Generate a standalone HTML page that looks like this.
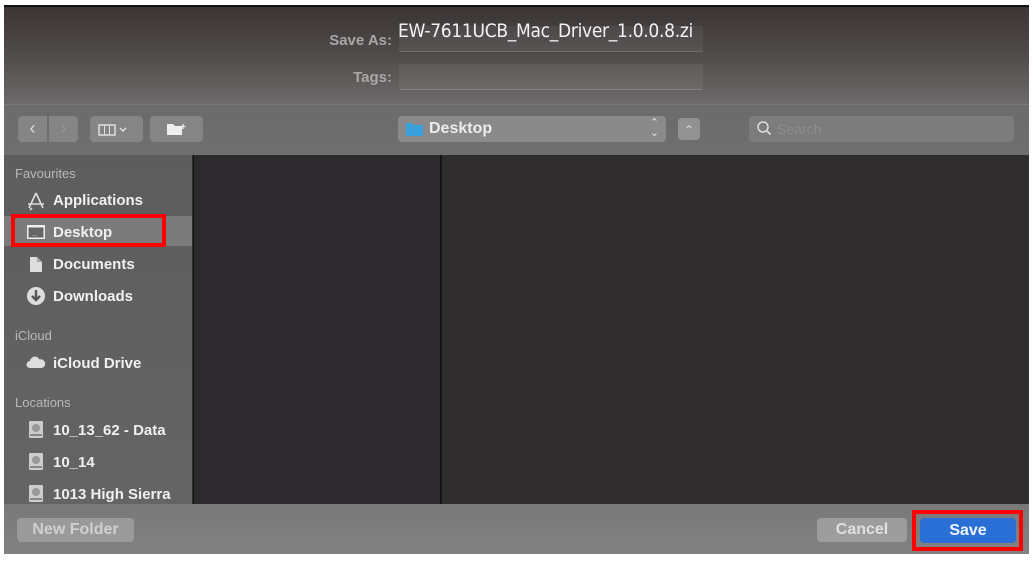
<!DOCTYPE html>
<html><head><meta charset="utf-8"><style>
*{margin:0;padding:0;box-sizing:border-box}
body{width:1033px;height:563px;background:#fff;position:relative;overflow:hidden;font-family:"Liberation Sans",sans-serif}
.dlg{position:absolute;left:4px;top:5px;width:1025px;height:549px;background:#2f2d2e;border-top:2px solid #111;overflow:hidden}
.head{position:absolute;left:0;top:0;width:100%;height:97px;background:linear-gradient(180deg,#3b3434 0%,#4c4646 40%,#6c6a6a 100%)}
.lbl{position:absolute;color:#a9a6a6;font-size:15px;font-weight:bold;text-align:right;width:100px}
.fld{position:absolute;left:395px;width:304px;height:26px;background:rgba(255,255,255,0.06);border-bottom:1px solid rgba(255,255,255,0.15);border-radius:2px}
.fname{position:absolute;left:394px;top:13px;color:#f2f2f2;font-size:19px;font-family:"DejaVu Sans Condensed","Liberation Sans",sans-serif;letter-spacing:-0.3px}
.tool{position:absolute;left:0;top:97px;width:100%;height:51px;background:linear-gradient(180deg,#6b6b6b,#6f6f6f);border-top:1px solid #7a7878}
.btn{position:absolute;background:#858585;border-radius:4px;color:#d8d8d8}
.side{position:absolute;left:0;top:148px;width:188px;height:349px;background:linear-gradient(180deg,#5d5d5d,#646464)}
.sec{position:absolute;left:11px;color:#b9b9b9;font-size:13px}
.it{position:absolute;left:49px;color:#f0f0f0;font-size:15px;font-weight:bold}
.ico{position:absolute;left:22px;width:20px;height:20px}
.col1{position:absolute;left:189px;top:148px;width:249px;height:349px;background:#2c2a2c;border-left:1px solid #111;border-right:2px solid #151515}
.bot{position:absolute;left:0;top:497px;width:100%;height:52px;background:linear-gradient(180deg,#797979,#828282)}
</style></head><body>
<div class="dlg">
 <div class="head">
  <div class="lbl" style="left:288px;top:25px">Save As:</div>
  <div class="fld" style="top:19px"></div>
  <div class="fname">EW-7611UCB_Mac_Driver_1.0.0.8.zi</div>
  <div class="lbl" style="left:288px;top:62px">Tags:</div>
  <div class="fld" style="top:57px"></div>
 </div>
 <div class="tool">
  <div class="btn" style="left:14px;top:11px;width:29px;height:26px;border-radius:4px 0 0 4px;font-size:18px;text-align:center;line-height:25px">&#8249;</div>
  <div class="btn" style="left:45px;top:11px;width:29px;height:26px;border-radius:0 4px 4px 0;color:#9a9a9a;font-size:18px;text-align:center;line-height:25px">&#8250;</div>
  <div class="btn" style="left:86px;top:11px;width:53px;height:26px">
   <svg width="53" height="26"><rect x="9" y="9" width="16" height="10" fill="none" stroke="#e0e0e0" stroke-width="1.5"/><line x1="14.5" y1="9" x2="14.5" y2="19" stroke="#e0e0e0"/><line x1="19.5" y1="9" x2="19.5" y2="19" stroke="#e0e0e0"/><path d="M30 12l3 3 3-3" fill="none" stroke="#e0e0e0" stroke-width="1.5"/></svg>
  </div>
  <div class="btn" style="left:146px;top:11px;width:53px;height:26px">
   <svg width="53" height="26"><path d="M17 8h6l2 2h7v9H17z" fill="#eee"/><path d="M33 8v5M30.5 10.5h5" stroke="#eee" stroke-width="1.3"/></svg>
  </div>
  <div class="btn" style="left:394px;top:11px;width:268px;height:26px;background:#8a8a8a">
   <svg width="24" height="26" style="position:absolute;left:6px;top:0"><path d="M2 7h6l2 2h9v11H2z" fill="#3aa0dc"/></svg>
   <span style="position:absolute;left:31px;top:4px;font-size:16px;font-weight:bold;color:#ececec">Desktop</span>
   <span style="position:absolute;right:7px;top:2px;font-size:11px;line-height:10px;color:#e6e6e6">&#8963;<br>&#8964;</span>
  </div>
  <div class="btn" style="left:674px;top:13px;width:22px;height:22px;background:#929292;font-size:12px;text-align:center;line-height:24px">&#8963;</div>
  <div class="btn" style="left:745px;top:11px;width:265px;height:26px;background:#7c7c7c">
   <svg width="20" height="26" style="position:absolute;left:6px;top:0"><circle cx="8" cy="11" r="5" fill="none" stroke="#ddd" stroke-width="1.5"/><path d="M11.5 14.5l4 4" stroke="#ddd" stroke-width="1.6"/></svg>
   <span style="position:absolute;left:28px;top:5px;font-size:14px;color:#8d8d8d">Search</span>
  </div>
 </div>
 <div class="side">
  <div class="sec" style="top:11px">Favourites</div>
  <svg class="ico" style="top:36px" viewBox="0 0 20 20"><path d="M10 2L3 17M10 2l7 15M2 13h16M6 17l-2 2" stroke="#ddd" stroke-width="1.6" fill="none"/></svg>
  <div class="it" style="top:37px">Applications</div>
  <div style="position:absolute;left:0;top:61px;width:188px;height:30px;background:#7b7b7b"></div>
  <div style="position:absolute;left:7px;top:59px;width:155px;height:33px;border:4px solid #f00"></div>
  <svg class="ico" style="top:67px" viewBox="0 0 20 20"><rect x="1" y="3" width="18" height="14" fill="#eee"/><rect x="2.5" y="5.5" width="15" height="10" fill="#666"/><text x="6" y="14" font-size="6" fill="#eee">...</text></svg>
  <div class="it" style="top:69px">Desktop</div>
  <svg class="ico" style="top:99px" viewBox="0 0 20 20"><path d="M4 3h7l5 5v10H4z" fill="#ddd"/><path d="M11 3v5h5" fill="#aaa"/></svg>
  <div class="it" style="top:101px">Documents</div>
  <svg class="ico" style="top:131px" viewBox="0 0 20 20"><circle cx="10" cy="10" r="9" fill="#ddd"/><path d="M10 4v9M6 10l4 4 4-4" stroke="#555" stroke-width="2.4" fill="none"/></svg>
  <div class="it" style="top:133px">Downloads</div>
  <div class="sec" style="top:173px">iCloud</div>
  <svg class="ico" style="top:197px" viewBox="0 0 20 20"><path d="M4 16a3.5 3.5 0 010-7 5 5 0 019.5-1.5A4 4 0 0116 16z" fill="#ddd"/></svg>
  <div class="it" style="top:200px">iCloud Drive</div>
  <div class="sec" style="top:240px">Locations</div>
  <svg class="ico" style="top:264px" viewBox="0 0 20 20"><rect x="3" y="2" width="14" height="17" rx="1" fill="#ccc"/><circle cx="10" cy="9" r="4" fill="#999"/><rect x="4" y="15" width="12" height="2" fill="#888"/></svg>
  <div class="it" style="top:267px">10_13_62 - Data</div>
  <svg class="ico" style="top:296px" viewBox="0 0 20 20"><rect x="3" y="2" width="14" height="17" rx="1" fill="#ccc"/><circle cx="10" cy="9" r="4" fill="#999"/><rect x="4" y="15" width="12" height="2" fill="#888"/></svg>
  <div class="it" style="top:299px">10_14</div>
  <svg class="ico" style="top:328px" viewBox="0 0 20 20"><rect x="3" y="2" width="14" height="17" rx="1" fill="#ccc"/><circle cx="10" cy="9" r="4" fill="#999"/><rect x="4" y="15" width="12" height="2" fill="#888"/></svg>
  <div class="it" style="top:331px">1013 High Sierra</div>
 </div>
 <div class="col1"></div>
 <div class="bot">
  <div class="btn" style="left:13px;top:14px;width:117px;height:24px;background:#9a9a9a;font-size:16px;font-weight:bold;color:#d0d0d0;text-align:center;line-height:24px">New Folder</div>
  <div class="btn" style="left:813px;top:14px;width:90px;height:24px;background:#9d9d9d;font-size:16px;font-weight:bold;color:#e0e0e0;text-align:center;line-height:24px">Cancel</div>
  <div style="position:absolute;left:908px;top:6px;width:111px;height:41px;border:4px solid #f00"></div>
  <div class="btn" style="left:916px;top:14px;width:96px;height:25px;background:#2a6fd6;font-size:16px;font-weight:bold;color:#eef3ff;text-align:center;line-height:25px">Save</div>
 </div>
</div>
</body></html>
